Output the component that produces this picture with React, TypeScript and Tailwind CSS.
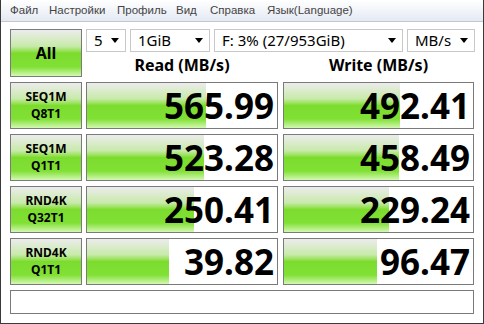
import React from "react";

const green =
  "bg-[linear-gradient(to_bottom,#ececec_0%,#c8eaaa_35%,#9ae25c_45%,#7cdc2e_50%,#80e034_80%,#d4f8b4_100%)]";

const rows = [
  { a: "SEQ1M", b: "Q8T1",  read: "565.99", rw: 119, write: "492.41", ww: 116 },
  { a: "SEQ1M", b: "Q1T1",  read: "523.28", rw: 117, write: "458.49", ww: 115 },
  { a: "RND4K", b: "Q32T1", read: "250.41", rw: 107, write: "229.24", ww: 105 },
  { a: "RND4K", b: "Q1T1",  read: "39.82",  rw: 82,  write: "96.47",  ww: 93  },
];

// menu items with the width each one takes in the bar
const menu = [
  { t: "Файл",           w: "w-[39px]" },
  { t: "Настройки",      w: "w-[68px]" },
  { t: "Профиль",        w: "w-[59px]" },
  { t: "Вид",            w: "w-[34px]" },
  { t: "Справка",        w: "w-[57px]" },
  { t: "Язык(Language)", w: "w-auto" },
];

function Select({ value, w }: { value: string; w: string }) {
  return (
    <div className={`${w} h-[23px] flex items-center justify-between border border-[#c8c8c8] bg-white pl-[7px] pr-[6px]`}>
      <span className="text-[15px] leading-none text-black">{value}</span>
      <svg width="8" height="5" viewBox="0 0 8 5" aria-hidden="true">
        <path d="M0 0h8L4 5z" fill="#000" />
      </svg>
    </div>
  );
}

function Result({ value, fill, w }: { value: string; fill: number; w: string }) {
  return (
    <div className={`${w} h-[47px] relative border border-[#7a7a7a] bg-white flex items-center justify-end pr-[3px]`}>
      <div className={`absolute left-0 top-0 bottom-0 ${green}`} style={{ width: fill }} />
      <span className="relative text-[35px] font-bold leading-none text-black">{value}</span>
    </div>
  );
}

export default function App() {
  return (
    <div
      className="w-[484px] h-[324px] flex flex-col bg-white border border-[#3a3a3a] border-t-0 overflow-hidden"
      style={{ fontFamily: '"Noto Sans", "DejaVu Sans", sans-serif' }}
    >
      {/* Menu */}
      <div className="h-[22px] flex items-center pl-[9px] bg-[linear-gradient(to_bottom,#ffffff,#e4e9f2)] border-b border-[#c2c8d2]">
        {menu.map((m) => (
          <span
            key={m.t}
            className={`${m.w} shrink-0 whitespace-nowrap text-[11.5px] leading-none text-[#444]`}
            style={{ fontFamily: '"Liberation Sans", Arial, sans-serif' }}
          >
            {m.t}
          </span>
        ))}
      </div>

      {/* Body */}
      <div className="flex-1 flex flex-col gap-[5px] pl-[9px] pt-[7px]">
        <div className="flex gap-[4px]">
          <div className={`w-[72px] h-[48px] border border-[#7a7a7a] ${green} flex items-center justify-center`}>
            <span className="text-[16px] font-bold text-black">All</span>
          </div>
          <div className="flex flex-col">
            <div className="flex gap-[4px]">
              <Select value="5" w="w-[40px]" />
              <Select value="1GiB" w="w-[80px]" />
              <Select value="F: 3% (27/953GiB)" w="w-[189px]" />
              <Select value="MB/s" w="w-[68px]" />
            </div>
            <div className="flex gap-[5px] h-[25px] items-center">
              <div className="w-[192px] text-center text-[16px] font-bold leading-none text-black">Read (MB/s)</div>
              <div className="w-[191px] text-center text-[16px] font-bold leading-none text-black">Write (MB/s)</div>
            </div>
          </div>
        </div>

        {rows.map((r) => (
          <div key={r.a + r.b} className="flex gap-[4px]">
            <div className={`w-[72px] h-[47px] border border-[#7a7a7a] ${green} flex flex-col items-center justify-center gap-[5px]`}>
              <span className="text-[12px] font-bold leading-none text-black">{r.a}</span>
              <span className="text-[12px] font-bold leading-none text-black">{r.b}</span>
            </div>
            <Result value={r.read} fill={r.rw} w="w-[192px]" />
            <div className="ml-[1px] flex">
              <Result value={r.write} fill={r.ww} w="w-[191px]" />
            </div>
          </div>
        ))}

        <div className="w-[464px] h-[24px] border border-[#7a7a7a] bg-white" />
      </div>
    </div>
  );
}
